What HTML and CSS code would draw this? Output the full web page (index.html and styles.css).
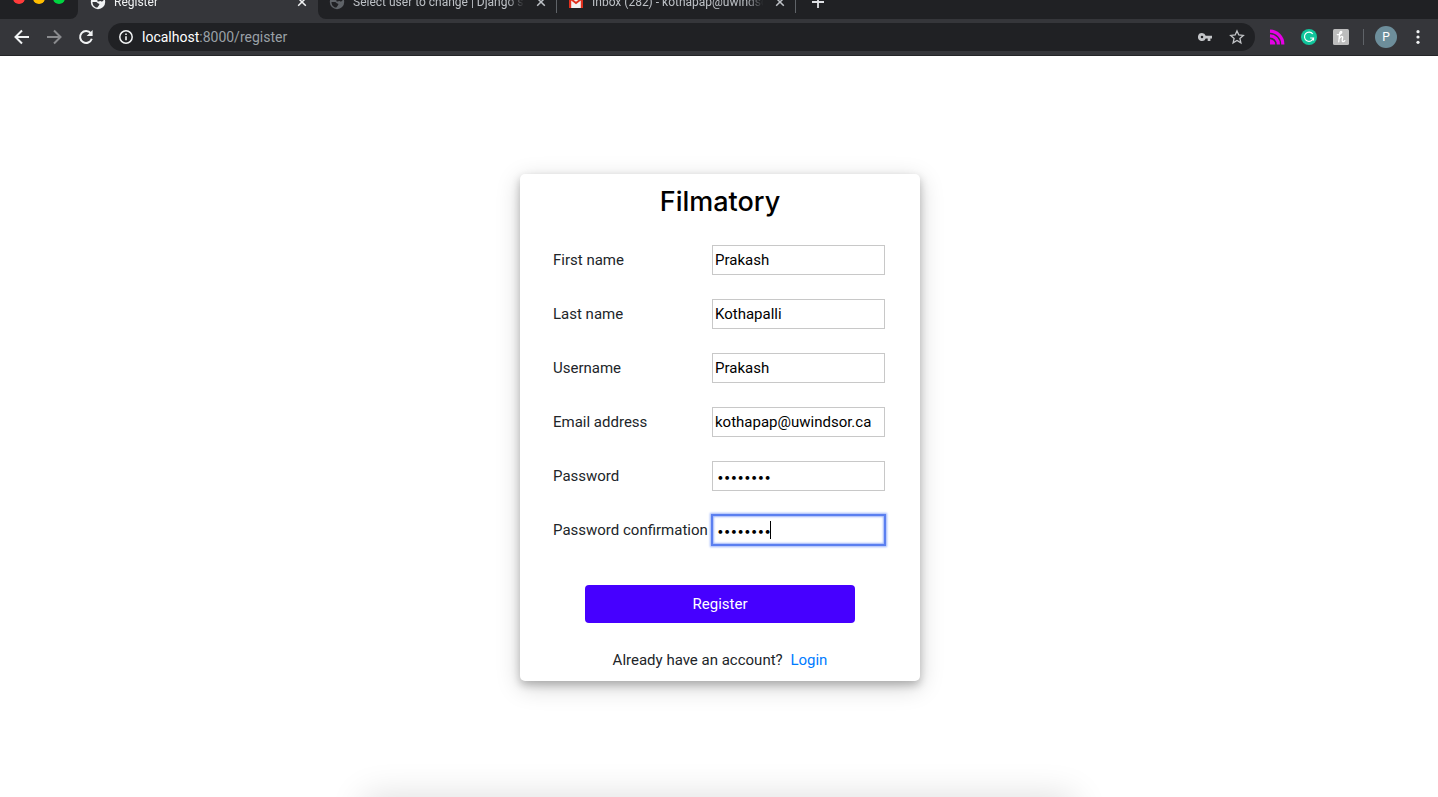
FILE: index.html
```html
<!DOCTYPE html>
<html lang="en">
<head>
<meta charset="utf-8">
<title>Register</title>
<link rel="stylesheet" href="styles.css">
</head>
<body>
<header class="browser">
  <div class="tabstrip">
    <div class="lights"><span class="light red"></span><span class="light yellow"></span><span class="light green"></span></div>
    <div class="tab active">
      <svg class="favicon" viewBox="0 0 16 16" aria-hidden="true"><circle cx="8" cy="8" r="7.200" fill="#f1f3f4"/><path d="M2.500 8h3.500c1.400 0 1.300 1.500 2.400 1.500 1.300 0 1.200 1.200.4 1.900L7.300 13.600C4.500 13.400 2.400 11 2.500 8zM9 2.600c2.300.2 4 1.700 4.500 3.900-.8 1.200-1.900 1.200-2.700.7-.8-.5-1.400.4-2.800.2-.9-.2-.9-1.200 0-1.700 1-.5 1.200-1.600 1-3.100z" fill="#35363a"/></svg>
      <span class="tab-title">Register</span>
      <button class="tab-close" aria-label="Close tab"><svg viewBox="0 0 10 10"><path d="M1.200 1.200l7.600 7.600M8.800 1.200L1.200 8.800"/></svg></button>
    </div>
    <div class="rest">
      <div class="tab">
        <svg class="favicon" viewBox="0 0 16 16" aria-hidden="true"><circle cx="8" cy="8" r="7.200" fill="#5f6368"/><path d="M2.500 8h3.500c1.400 0 1.300 1.500 2.400 1.500 1.300 0 1.200 1.200.4 1.900L7.300 13.600C4.500 13.400 2.400 11 2.500 8zM9 2.600c2.300.2 4 1.700 4.500 3.900-.8 1.200-1.900 1.200-2.700.7-.8-.5-1.400.4-2.800.2-.9-.2-.9-1.200 0-1.700 1-.5 1.200-1.600 1-3.100z" fill="#202124"/></svg>
        <span class="tab-title">Select user to change | Django site admin</span>
        <button class="tab-close" aria-label="Close tab"><svg viewBox="0 0 10 10"><path d="M1.200 1.200l7.600 7.600M8.800 1.200L1.200 8.800"/></svg></button>
      </div>
      <div class="tab">
        <svg class="favicon" viewBox="0 0 16 16" aria-hidden="true"><path d="M1 2h14v12H1z" fill="#f1f1f1"/><path d="M1 2.500V14h2.200V6.500L8 10.200l4.800-3.700V14H15V2.500L8 7.800z" fill="#e0301e"/></svg>
        <span class="tab-title">Inbox (282) - kothapap@uwindsor.ca</span>
        <button class="tab-close" aria-label="Close tab"><svg viewBox="0 0 10 10"><path d="M1.200 1.200l7.600 7.600M8.800 1.200L1.200 8.800"/></svg></button>
      </div>
      <button class="new-tab" aria-label="New tab"><svg viewBox="0 0 12 12"><path d="M6 0v12M0 6h12"/></svg></button>
    </div>
  </div>
  <div class="toolbar">
    <nav class="nav">
      <button class="icon" aria-label="Back"><svg viewBox="0 0 16 16" class="line"><path d="M15 8H2M8 1.500L1.500 8 8 14.500"/></svg></button>
      <button class="icon dim" aria-label="Forward"><svg viewBox="0 0 16 16" class="line"><path d="M1 8h13M8 1.500L14.500 8 8 14.500"/></svg></button>
      <button class="icon" aria-label="Reload"><svg viewBox="0 0 16 16" class="line"><path d="M12.800 4.200A6 6 0 1 0 13.800 9.800"/><path d="M14.600 1v6H8.600z" fill="#f1f3f4" stroke="none"/></svg></button>
    </nav>
    <div class="omnibox">
      <svg class="info" viewBox="0 0 16 16"><circle cx="8" cy="8" r="6.200" fill="none" stroke="#f1f3f4" stroke-width="1.500"/><path d="M7.200 7.200h1.600v4H7.200zM7.200 4.500h1.600v1.600H7.200z" fill="#f1f3f4"/></svg>
      <span class="url"><b>localhost</b>:8000/register</span>
      <button class="icon soft" aria-label="Saved passwords"><svg viewBox="0 0 16 16"><path fill-rule="evenodd" d="M5 4a4 4 0 1 0 3.700 5.400h2V12h2.700V9.400H15V6.700H8.700A4 4 0 0 0 5 4zm0 2.700a1.300 1.300 0 1 1 0 2.600 1.300 1.300 0 0 1 0-2.600z" fill="#c3c5c8"/></svg></button>
      <button class="icon soft" aria-label="Bookmark"><svg viewBox="0 0 16 16"><path d="M8 1.900l1.800 4.100 4.500.4-3.400 3 1 4.400L8 11.500l-3.900 2.300 1-4.400-3.400-3 4.500-.4z" fill="none" stroke="#c3c5c8" stroke-width="1.300"/></svg></button>
    </div>
    <div class="extensions">
      <svg class="ext" viewBox="0 0 16 16"><path d="M1 2.200A13 13 0 0 1 13.800 15.500M1 6.800A8.700 8.700 0 0 1 9.400 15.500" fill="none" stroke="#e600e6" stroke-width="3.200"/><path d="M1 10.200A5.300 5.300 0 0 1 6.300 15.500H1z" fill="#e600e6"/></svg>
      <svg class="ext" viewBox="0 0 16 16"><circle cx="8" cy="8" r="8" fill="#11c49b"/><path d="M11.800 5A4.600 4.600 0 1 0 12.500 9H9.200M12.500 9v2.500" fill="none" stroke="#fff" stroke-width="1.200"/></svg>
      <svg class="ext" viewBox="0 0 16 16"><rect width="16" height="16" rx="1.500" fill="#bdbdbd"/><path d="M4.300 5.600C6.500 5.800 9 4.300 8.800 3 8.500 1.900 6.800 2.600 6.600 4.600L5.800 12.800M6 10C7 7.600 9.800 6.500 9.700 8.500L9.200 11.200c-.1 2 1.700 1.600 2.600.4" fill="none" stroke="#fff" stroke-width="1.300" stroke-linecap="round"/></svg>
      <span class="divider"></span>
      <button class="avatar">P</button>
      <button class="icon menu" aria-label="Menu"><svg viewBox="0 0 16 16"><g fill="#f1f3f4"><circle cx="8" cy="2.700" r="1.600"/><circle cx="8" cy="8" r="1.600"/><circle cx="8" cy="13.300" r="1.600"/></g></svg></button>
    </div>
  </div>
</header>
<main class="page">
  <form class="card">
    <h1 class="title">Filmatory</h1>
    <div class="fields">
      <label for="first">First name</label><input id="first" type="text" value="Prakash">
      <label for="last">Last name</label><input id="last" type="text" value="Kothapalli">
      <label for="user">Username</label><input id="user" type="text" value="Prakash">
      <label for="email">Email address</label><input id="email" type="email" value="kothapap@uwindsor.ca">
      <label for="pass">Password</label><input id="pass" type="password" value="filmfilm">
      <label for="confirm">Password confirmation</label><div class="current"><input id="confirm" type="password" value="filmfilm"><span class="caret"></span></div>
    </div>
    <button class="submit" type="button">Register</button>
    <p class="login">Already have an account? <a href="#login">Login</a></p>
  </form>
</main>
<div class="dock-shadow"></div>
</body>
</html>
```
FILE: styles.css
```css
* { box-sizing: border-box; }
body {
  margin: 0;
  min-height: 100vh;
  display: flex;
  flex-direction: column;
  position: relative;
  overflow: hidden;
  background: #fff;
  color: #212529;
  font: 15px/24px Roboto, "Liberation Sans", sans-serif;
}
button { margin: 0; padding: 0; border: 0; background: none; font: inherit; color: inherit; }
svg { display: block; }

.browser { background: #35363a; color: #f1f3f4; border-bottom: 1px solid #242528; }
.tabstrip { display: flex; align-items: flex-end; height: 19px; overflow: hidden; }
.lights {
  display: flex;
  gap: 8px;
  flex: none;
  width: 78px;
  height: 34px;
  padding: 7px 0 0 13px;
  background: #202124;
  border-bottom-right-radius: 8px;
}
.light { width: 12px; height: 12px; border-radius: 50%; }
.red { background: #ff3b3b; }
.yellow { background: #ffbd00; }
.green { background: #00d441; }
.rest {
  flex: 1;
  min-width: 0;
  display: flex;
  background: #202124;
  border-bottom-left-radius: 8px;
}
.tab {
  flex: 0 1 239px;
  min-width: 0;
  height: 34px;
  display: flex;
  align-items: center;
  gap: 8px;
  padding: 0 11px;
  color: #bdc1c6;
  font-size: 12px;
}
.tab.active { flex-basis: 240px; padding-left: 12px; color: #f1f3f4; }
.rest .tab { background: linear-gradient(#5f6368, #5f6368) right 8px / 1px 20px no-repeat; }
.favicon { width: 16px; height: 16px; flex: none; }
.tab-title {
  flex: 1;
  min-width: 0;
  overflow: hidden;
  white-space: nowrap;
  -webkit-mask-image: linear-gradient(90deg, #000 88%, transparent 98%);
  mask-image: linear-gradient(90deg, #000 88%, transparent 98%);
}
.tab-close svg { width: 10px; height: 10px; stroke: currentColor; stroke-width: 1.5; }
.new-tab { padding-left: 16px; }
.new-tab svg { width: 12px; height: 12px; stroke: #dfe1e5; stroke-width: 1.8; }

.toolbar { display: flex; align-items: center; height: 36px; padding: 0 12px 0 14px; }
.nav { display: flex; gap: 16px; margin-right: 14px; }
.icon svg { width: 16px; height: 16px; }
.line { fill: none; stroke: #f1f3f4; stroke-width: 2; }
.dim { opacity: 0.45; }
.omnibox {
  flex: 1;
  min-width: 0;
  display: flex;
  align-items: center;
  height: 28px;
  padding: 0 10px;
  border-radius: 14px;
  background: #202124;
}
.info { width: 16px; height: 16px; margin-right: 8px; }
.url { flex: 1; color: #9aa0a6; font-size: 14px; }
.url b { color: #fff; font-weight: 400; }
.soft { margin-left: 16px; }
.extensions { display: flex; align-items: center; gap: 16px; margin-left: 14px; }
.ext { width: 16px; height: 16px; }
.divider { width: 1px; height: 16px; margin: 0 -5px 0 -2px; background: #5f6368; }
.avatar { width: 22px; height: 22px; border-radius: 50%; background: #6d8e9b; color: #fff; font-size: 12px; line-height: 22px; }
.menu { margin-left: -3px; }

.page { flex: 1; display: flex; align-items: center; justify-content: center; padding: 2px 0 0 2px; }
.card {
  width: 400px;
  padding: 11px 33px 9px;
  border-radius: 5px;
  background: #fff;
  box-shadow: 0 4px 8px rgba(0, 0, 0, 0.24), 0 6px 24px rgba(0, 0, 0, 0.18);
}
.title { margin: 0 0 26px; color: #000; font: 500 27px/34px Inter, sans-serif; text-align: center; }
.fields { display: grid; grid-template-columns: 159px 173px; row-gap: 24px; align-items: center; white-space: nowrap; }
.fields input {
  display: block;
  width: 100%;
  height: 30px;
  padding: 1px 2px;
  border: 1px solid #c8c8c8;
  border-radius: 0;
  outline: none;
  background: #fff;
  color: #000;
  font: inherit;
}
.fields input[type="password"] { padding-left: 4px; font-family: Inter, sans-serif; font-size: 12px; }
.current { position: relative; }
.fields .current input { border-color: #5b7ff0; box-shadow: 0 0 0 1px #5b7ff0, 0 0 2px 2px #9db4fa, inset 0 0 2px 1px #9db4fa; }
.caret { position: absolute; left: 58px; top: 6px; width: 1px; height: 18px; background: #000; }
.submit {
  display: block;
  width: 270px;
  height: 38px;
  margin: 40px auto 25px;
  border-radius: 4px;
  background: #4600ff;
  color: #fff;
}
.login { margin: 0; text-align: center; }
.login a { margin-left: 4px; color: #007bff; text-decoration: none; }
.dock-shadow {
  position: absolute;
  left: 26%;
  right: 26%;
  bottom: -30px;
  height: 20px;
  box-shadow: 0 0 36px 10px rgba(0, 0, 0, 0.14);
}
```
